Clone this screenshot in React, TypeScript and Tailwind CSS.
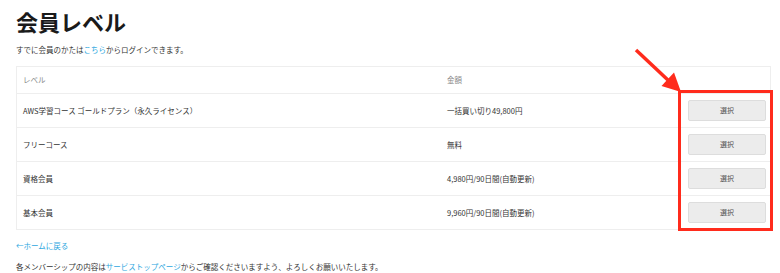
const rows = [
  { level: 'AWS学習コース ゴールドプラン（永久ライセンス）', price: '一括買い切り49,800円' },
  { level: 'フリーコース', price: '無料' },
  { level: '資格会員', price: '4,980円/90日間(自動更新)' },
  { level: '基本会員', price: '9,960円/90日間(自動更新)' },
];

export default function App() {
  return (
    <div
      className="relative w-[780px] h-[273px] overflow-hidden bg-white text-[#333]"
      style={{ fontFamily: '"Noto Sans CJK JP", "Noto Sans", sans-serif' }}
    >
      <div className="pl-4 pr-[9px]">
        <h1 className="mt-[9px] text-[22px] leading-[24px] font-bold text-[#1a1a1a]">会員レベル</h1>
        <p className="mt-[12px] text-[7.5px] leading-[10px]">
          すでに会員のかたは<span className="text-[#2ea7e0]">こちら</span>からログインできます。
        </p>

        {/* Levels table */}
        <div className="mt-[11px] border border-[#eeeeee]">
          <div className="flex h-[26px] items-center text-[7.5px] text-[#888]">
            <div className="w-[430px] pl-[6px]">レベル</div>
            <div className="flex-1">金額</div>
          </div>
          {rows.map((r) => (
            <div key={r.level} className="flex h-[34px] items-center border-t border-[#eeeeee] text-[7.5px]">
              <div className="w-[430px] pl-[6px]">{r.level}</div>
              <div className="flex-1">{r.price}</div>
              <div className="flex w-[100px] justify-end pr-[4px]">
                <button className="h-[21px] w-[78px] rounded-[2px] border border-[#dddddd] bg-[#ececec] text-[7px] text-[#555]">
                  選択
                </button>
              </div>
            </div>
          ))}
        </div>

        <p className="mt-[11px] text-[7.5px] leading-[10px] text-[#2ea7e0]">←ホームに戻る</p>
        <p className="mt-[11px] text-[7.5px] leading-[10px]">
          各メンバーシップの内容は<span className="text-[#2ea7e0]">サービストップページ</span>からご確認くださいますよう、よろしくお願いいたします。
        </p>
      </div>

      {/* annotation */}
      <div className="absolute left-[678px] top-[90px] h-[141px] w-[95px] border-[3px] border-[#ff2b1c]" />
      <svg className="absolute left-0 top-0" width="780" height="273">
        <line x1="636" y1="50" x2="669" y2="81" stroke="#ff2b1c" strokeWidth="3.5" />
        <polygon points="681,92 661.5,86 674,72.5" fill="#ff2b1c" />
      </svg>
    </div>
  );
}
